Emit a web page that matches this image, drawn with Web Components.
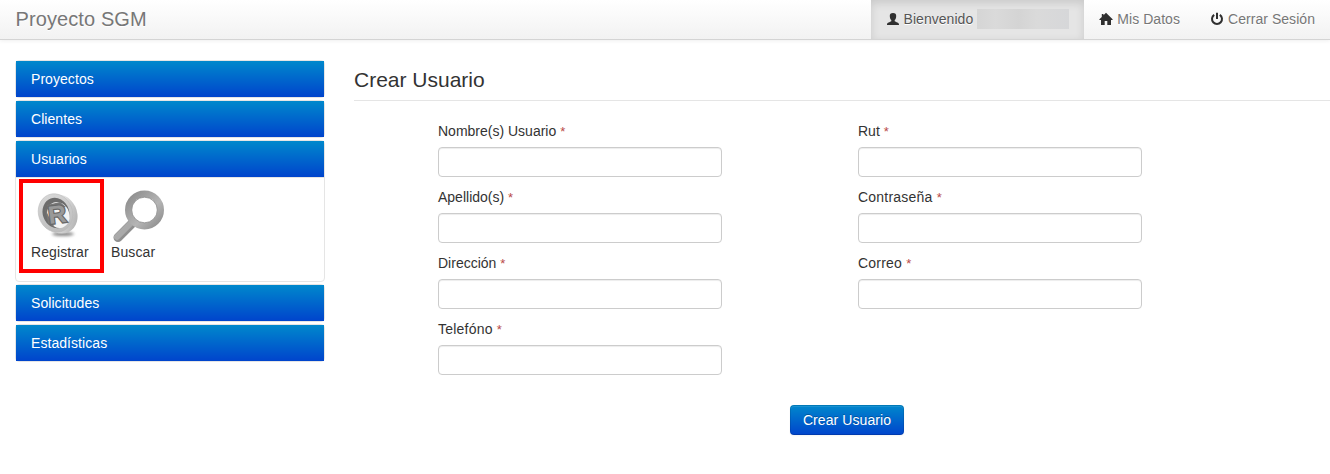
<!DOCTYPE html>
<html lang="es">
<head>
<meta charset="utf-8">
<title>Proyecto SGM</title>
<style>
html,body{margin:0;height:474px;overflow:hidden;background:#fff}
body{font:14px/20px "Liberation Sans",Arial,sans-serif;color:#333}
</style>
</head>
<body>
<sgm-app></sgm-app>
<script>
const define = (name, html) => customElements.define(name, class extends HTMLElement {
  constructor() {
    super();
    const t = document.createElement('template');
    t.innerHTML = html;
    this.attachShadow({mode: 'open'}).appendChild(t.content.cloneNode(true));
    for (const el of this.shadowRoot.querySelectorAll('[data-text]'))
      el.textContent = this.getAttribute(el.dataset.text) || '';
  }
});

define('nav-link', `
<style>
:host{display:flex;align-items:center;height:39px;box-sizing:border-box;padding:0 15px 1px;color:#777;text-shadow:0 1px 0 #fff;white-space:pre;letter-spacing:.05px}
:host([active]){background:#e5e5e5;color:#555;box-shadow:inset 0 3px 8px rgba(0,0,0,.125)}
::slotted(svg){display:block;width:14px;height:14px;margin-right:4px;fill:#2f2f2f}
::slotted(.mask){width:92px;height:20px;margin-left:4px;background:linear-gradient(90deg,#d5d5d5,#dadada 20%,#d4d4d4 45%,#dadada 65%,#d6d7d9)}
</style><slot></slot>`);

define('nav-bar', `
<style>
:host{display:flex;justify-content:space-between;height:39px;background:linear-gradient(#fff,#f2f2f2);border-bottom:1px solid #d4d4d4;box-shadow:0 1px 4px rgba(0,0,0,.065)}
.brand{font-size:20px;line-height:38px;padding-left:15.500px;color:#777;text-shadow:0 1px 0 #fff;letter-spacing:.1px}
nav{display:flex}
</style>
<div class="brand">Proyecto SGM</div>
<nav>
<nav-link active><svg viewBox="0 0 14 14"><path d="M7 1C4.700 1 3.700 2.200 3.800 4c0 1.900.6 3.300 1.500 4.100v1.200C4 10.200 1 10.500 1 12.400V13h12v-.6c0-1.900-3-2.200-4.300-3.100V8.100C9.600 7.300 10.200 5.900 10.200 4c.1-1.800-.9-3-3.200-3z"/></svg>Bienvenido<div class="mask"></div></nav-link>
<nav-link><svg viewBox="0 0 14 14"><path d="M7 .8 13.600 7.200V8H12v5H8.300V9H5.700v4H2V8H.4v-.8L2.800 4.900V2h1.700v1.200z"/></svg>Mis Datos</nav-link>
<nav-link><svg viewBox="0 0 14 14"><path d="M6 .8h2v6.200H6z"/><path d="M4.200 2.800A5 5 0 1 0 9.800 2.800" fill="none" stroke="#2f2f2f" stroke-width="2"/></svg>Cerrar Sesión</nav-link>
</nav>`);

define('menu-group', `
<style>
:host{display:block;border:1px solid #e5e5e5;border-radius:4px;margin-bottom:2px}
.head{padding:8px 15px;color:#fff;background:linear-gradient(#08c,#04c);letter-spacing:.06px}
.body{display:none;border-top:1px solid #e5e5e5;height:104px;box-sizing:border-box;align-items:flex-start}
:host([open]) .body{display:flex}
</style>
<div class="head" data-text="label"></div><div class="body"><slot></slot></div>`);

define('menu-action', `
<style>
:host{display:flex;flex-direction:column;box-sizing:border-box;width:85px;height:94px;margin:1px 0 0 3px;padding:6px 8px 0;border:4px solid transparent;letter-spacing:.1px}
:host([selected]){border-color:#f00}
:host(:not([selected])){margin-left:-5px}
::slotted(svg){display:block;width:54px;height:54px;margin-bottom:-1px}
</style><slot></slot><span data-text="label"></span>`);

define('side-menu', `
<style>:host{display:block;width:310px;flex:none}</style>
<menu-group label="Proyectos"></menu-group>
<menu-group label="Clientes"></menu-group>
<menu-group label="Usuarios" open>
<menu-action label="Registrar" selected>
<svg viewBox="0 0 54 54"><defs>
<linearGradient id="rim" x1="0" y1="0" x2="1" y2="1"><stop offset="0" stop-color="#c4c4c4"/><stop offset=".45" stop-color="#e6e6e6"/><stop offset="1" stop-color="#a4a4a4"/></linearGradient>
<linearGradient id="face" x1="0" y1="0" x2="0" y2="1"><stop offset="0" stop-color="#d6d6d6"/><stop offset="1" stop-color="#bcbcbc"/></linearGradient>
<filter id="soft" x="-30%" y="-100%" width="160%" height="300%"><feGaussianBlur stdDeviation="1.500"/></filter></defs>
<ellipse cx="32" cy="45" rx="11" ry="2" fill="#888" filter="url(#soft)"/>
<ellipse cx="29" cy="25" rx="17" ry="20" fill="url(#rim)" transform="rotate(-25 29 25)"/>
<ellipse cx="24.500" cy="24" rx="17" ry="19.500" fill="url(#face)" stroke="#b8b8b8" stroke-width=".5" transform="rotate(-20 24.500 24)"/>
<ellipse cx="25" cy="24" rx="13.200" ry="15.500" fill="#6c6c6c" transform="rotate(-20 25 24)"/>
<ellipse cx="27.300" cy="26" rx="11" ry="13.200" fill="#f4f4f4" transform="rotate(-20 27.300 26)"/>
<path d="M14 19 17 34 24 39 18 28zM16 16l13-3 6 5-18 3z" fill="#777"/>
<g font-family="Liberation Sans,Arial,sans-serif" font-weight="700" font-size="25" transform="rotate(-7 25 25)"><text x="17" y="34" fill="#999" stroke="#696969" stroke-width="2.400" paint-order="stroke">R</text></g>
</svg></menu-action>
<menu-action label="Buscar">
<svg viewBox="0 0 54 54"><defs><linearGradient id="ring" x1="0" y1="0" x2="1" y2="1"><stop offset="0" stop-color="#8c8c8c"/><stop offset=".6" stop-color="#b5b5b5"/><stop offset="1" stop-color="#8d8d8d"/></linearGradient></defs>
<path d="M21 34.500 7 48.500" stroke="#8f8f8f" stroke-width="9" stroke-linecap="round"/>
<path d="M20 34 6 48" stroke="#aaa" stroke-width="6" stroke-linecap="round"/>
<circle cx="33.500" cy="21" r="16" fill="#fff" stroke="url(#ring)" stroke-width="7"/>
<circle cx="33.500" cy="21" r="12.800" fill="#fff" stroke="#888" stroke-width=".8"/></svg></menu-action>
</menu-group>
<menu-group label="Solicitudes"></menu-group>
<menu-group label="Estadísticas"></menu-group>`);

define('form-field', `
<style>
:host{display:block;width:284px}
label{display:block;height:20px;margin-bottom:6px}
:host([wide]) label{letter-spacing:.22px}
i{font-style:normal;font-size:13px;line-height:1;color:#b94a48}
input{display:block;box-sizing:border-box;width:100%;height:30px;margin:0;padding:4px 6px;background:#fff;border:1px solid #ccc;border-radius:4px;box-shadow:inset 0 1px 1px rgba(0,0,0,.075)}
</style>
<label><span data-text="label"></span> <i>*</i></label><input type="text">`);

define('primary-button', `
<style>
:host{display:block}
button{display:block;box-sizing:border-box;height:30px;width:114px;padding:4px 0;font:inherit;letter-spacing:.08px;color:#fff;text-shadow:0 -1px 0 rgba(0,0,0,.25);background:linear-gradient(#08c,#04c) border-box;border:1px solid;border-color:rgba(0,0,0,.1) rgba(0,0,0,.1) rgba(0,0,0,.15);border-radius:4px;box-shadow:inset 0 1px 0 rgba(255,255,255,.1),0 1px 2px rgba(0,0,0,.05)}
</style><button><slot></slot></button>`);

define('user-form', `
<style>
:host{display:block;flex:1}
h1{margin:0;font-size:21px;line-height:40px;font-weight:400;border-bottom:1px solid #e5e5e5}
.fields{display:grid;grid-template-columns:284px 284px;gap:10px 136px;padding:20px 0 0 84px}
primary-button{margin:30px 0 0 436px}
</style>
<h1>Crear Usuario</h1>
<div class="fields">
<form-field label="Nombre(s) Usuario"></form-field><form-field label="Rut"></form-field>
<form-field label="Apellido(s)"></form-field><form-field label="Contraseña" wide></form-field>
<form-field label="Dirección"></form-field><form-field label="Correo" wide></form-field>
<form-field label="Telefóno" wide></form-field>
</div>
<primary-button>Crear Usuario</primary-button>`);

define('sgm-app', `
<style>
:host{display:block}
main{display:flex;gap:29px;padding:20px 0 0 15px}
</style>
<nav-bar></nav-bar><main><side-menu></side-menu><user-form></user-form></main>`);
</script>
</body>
</html>
